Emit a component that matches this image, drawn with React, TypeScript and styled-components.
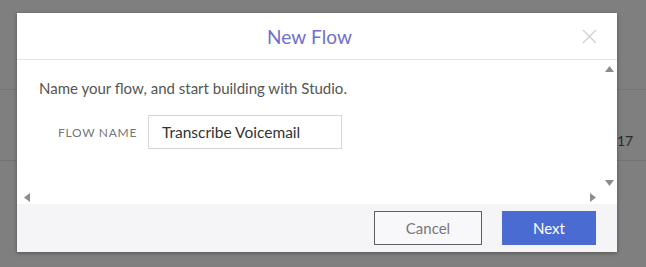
import React from "react";
import styled, { createGlobalStyle } from "styled-components";

const Global = createGlobalStyle`
  html, body { margin: 0; padding: 0; }
  body {
    width: 646px;
    height: 267px;
    overflow: hidden;
    background: #7f7f7f;
    font-family: Lato, "Open Sans", sans-serif;
  }
`;

const Stage = styled.div`
  position: relative;
  width: 646px;
  height: 267px;
  overflow: hidden;
  background: #7f7f7f;
`;

const BackTable = styled.div`
  display: grid;
  grid-template-rows: 90px 71px 1fr;
  height: 267px;
`;

const BackRow = styled.div<{ $line?: boolean }>`
  border-bottom: 1px solid ${(p) => (p.$line ? "#747474" : "transparent")};
  display: flex;
  align-items: center;
  justify-content: flex-end;
  padding-top: 30px;
  font-family: Lato, "Open Sans", sans-serif;
  font-size: 14px;
  color: #2a2a2a;
`;

const BackCell = styled.span`
  width: 29px;
`;

const Modal = styled.div`
  position: absolute;
  left: 17px;
  top: 13px;
  width: 600px;
  height: 239px;
  background: #fff;
  box-shadow: 0 1px 4px rgba(0, 0, 0, 0.35);
  display: grid;
  grid-template-rows: 47px 1fr 48px;
`;

const Header = styled.div`
  position: relative;
  display: flex;
  align-items: center;
  justify-content: center;
  padding-right: 15px;
  border-bottom: 1px solid #e4e4ea;
`;

const Title = styled.h2`
  margin: 0;
  font-weight: 400;
  font-size: 19px;
  color: #6f70cf;
  letter-spacing: 0.1px;
`;

const Close = styled.button`
  position: absolute;
  right: 20px;
  top: 16px;
  width: 15px;
  height: 15px;
  padding: 0;
  border: none;
  background: transparent;
  display: flex;
`;

const Body = styled.div`
  display: grid;
  grid-template-columns: 1fr 16px;
  grid-template-rows: 1fr 14px;
  min-height: 0;
`;

const Content = styled.div`
  padding: 19px 0 0 22px;
  display: flex;
  flex-direction: column;
  gap: 18px;
`;

const Intro = styled.p`
  margin: 0;
  font-size: 15px;
  color: #555;
  line-height: 18px;
`;

const Field = styled.label`
  display: flex;
  align-items: center;
  gap: 11px;
  padding-left: 19px;
`;

const FieldLabel = styled.span`
  font-size: 12px;
  letter-spacing: 0.7px;
  color: #777;
  text-transform: uppercase;
`;

const Input = styled.input`
  width: 194px;
  height: 34px;
  box-sizing: border-box;
  border: 1px solid #d6d6d6;
  padding: 0 13px;
  font-family: Lato, "Open Sans", sans-serif;
  font-size: 15.5px;
  color: #333;
  outline: none;
`;

const VScroll = styled.div`
  display: flex;
  flex-direction: column;
  justify-content: space-between;
  align-items: center;
  padding: 6px 0 4px;
`;

const HScroll = styled.div`
  display: flex;
  justify-content: space-between;
  align-items: center;
  padding: 0 5px 0 7px;
`;

const Footer = styled.div`
  background: #f5f5f7;
  display: flex;
  justify-content: flex-end;
  align-items: center;
  gap: 20px;
  padding-right: 21px;
`;

const Button = styled.button<{ $primary?: boolean }>`
  height: 34px;
  width: ${(p) => (p.$primary ? "94px" : "108px")};
  box-sizing: border-box;
  border: 1px solid ${(p) => (p.$primary ? "#4a6cd2" : "#5f5f5f")};
  background: ${(p) => (p.$primary ? "#4a6cd2" : "#f8f8fa")};
  color: ${(p) => (p.$primary ? "#fff" : "#777")};
  font-family: Lato, "Open Sans", sans-serif;
  font-size: 15px;
  padding: 0;
`;

const Arrow = ({ dir }: { dir: "up" | "down" | "left" | "right" }) => {
  const pts = {
    up: "0,6 4.5,0 9,6",
    down: "0,0 9,0 4.5,6",
    left: "6,0 6,9 0,4.5",
    right: "0,0 0,9 6,4.5",
  }[dir];
  const vertical = dir === "up" || dir === "down";
  return (
    <svg width={vertical ? 9 : 6} height={vertical ? 6 : 9} viewBox={vertical ? "0 0 9 6" : "0 0 6 9"}>
      <polygon points={pts} fill="#8c8c8c" />
    </svg>
  );
};

export default function App() {
  return (
    <>
      <Global />
      <Stage>
        <BackTable>
          <BackRow $line />
          <BackRow $line>
            <BackCell>17</BackCell>
          </BackRow>
          <BackRow />
        </BackTable>
        <Modal>
          <Header>
            <Title>New Flow</Title>
            <Close aria-label="Close">
              <svg width="15" height="15" viewBox="0 0 15 15">
                <path d="M1 1 L14 14 M14 1 L1 14" stroke="#cfcfcf" strokeWidth="1.2" />
              </svg>
            </Close>
          </Header>
          <Body>
            <Content>
              <Intro>Name your flow, and start building with Studio.</Intro>
              <Field>
                <FieldLabel>Flow Name</FieldLabel>
                <Input defaultValue="Transcribe Voicemail" />
              </Field>
            </Content>
            <VScroll>
              <Arrow dir="up" />
              <Arrow dir="down" />
            </VScroll>
            <HScroll>
              <Arrow dir="left" />
              <Arrow dir="right" />
            </HScroll>
            <div />
          </Body>
          <Footer>
            <Button>Cancel</Button>
            <Button $primary>Next</Button>
          </Footer>
        </Modal>
      </Stage>
    </>
  );
}
